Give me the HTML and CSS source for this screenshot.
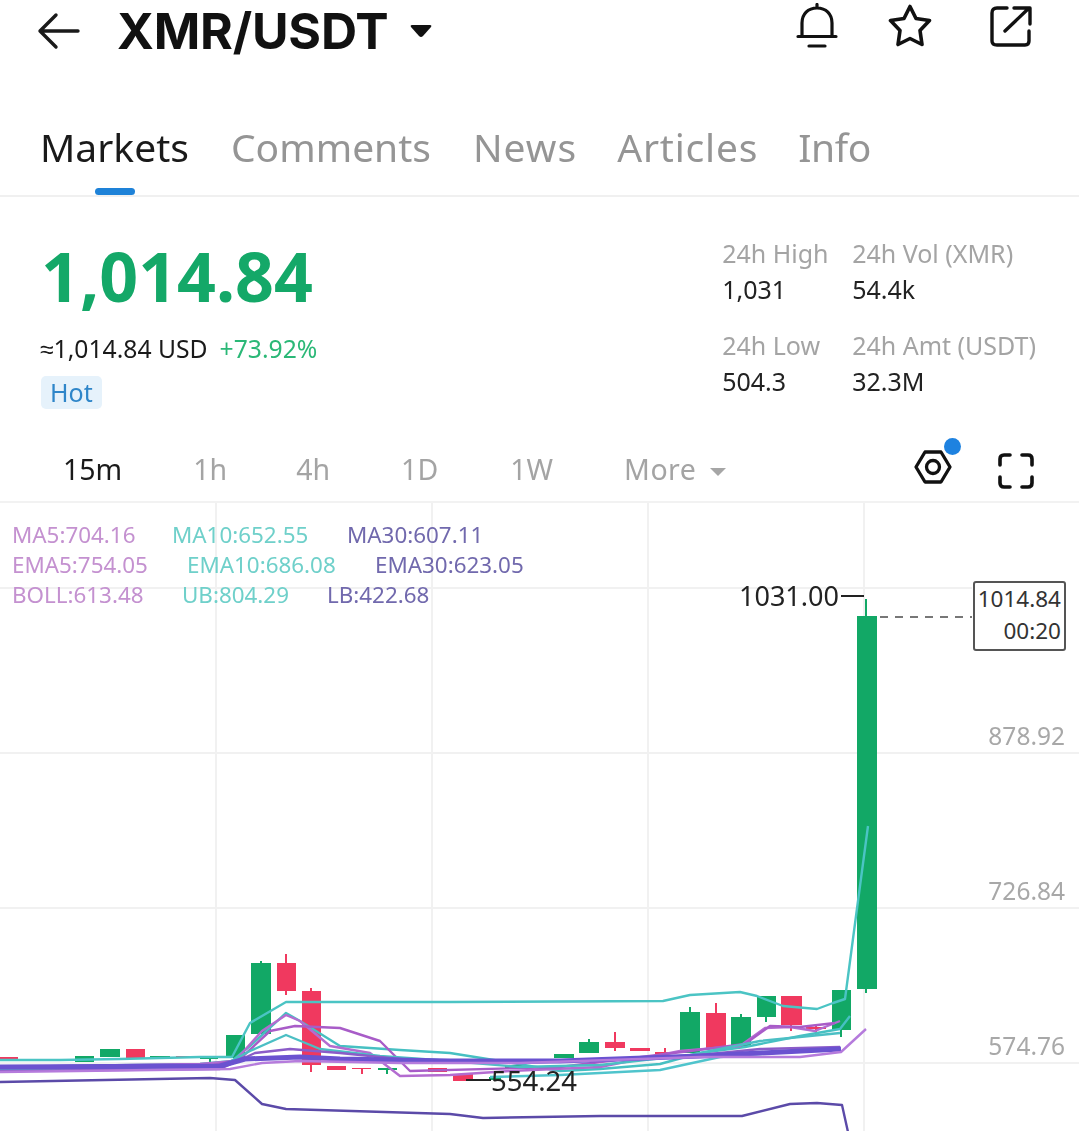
FILE: index.html
```html
<!DOCTYPE html>
<html lang="en">
<head>
<meta charset="utf-8">
<title>XMR/USDT</title>
<link rel="stylesheet" href="styles.css">
</head>
<body>
<div class="page">
  <header class="topbar">
    <svg class="back" width="46" height="40" viewBox="0 0 46 40" fill="none" stroke="#1a1a1a" stroke-width="3.4" stroke-linecap="round" stroke-linejoin="round"><path d="M4 20H42M20 4 4 20 20 36"/></svg>
    <h1 class="pair">XMR/USDT</h1>
    <svg class="caret" width="24" height="16" viewBox="0 0 24 16"><path d="M3 2H21Q23 2 22 4L14 13Q12 15 10 13L2 4Q1 2 3 2Z" fill="#111"/></svg>
    <div class="actions">
      <svg class="ic-bell" width="44" height="46" viewBox="0 0 44 46" fill="none" stroke="#111" stroke-width="3.200" stroke-linecap="round" stroke-linejoin="round"><path d="M22 1.500V4.500M3 33.500H41M7 33.500V20C7 11 13 5 22 5S37 11 37 20V33.500M14 43H30"/></svg>
      <svg class="ic-star" width="44" height="44" viewBox="0 0 44 44" fill="none" stroke="#111" stroke-width="3.600" stroke-linejoin="round"><path d="M22 2.500 28 14.500 41.500 16.500 32 26.500 34 40.500 22 34.500 10 40.500 12 26.500 2.500 16.500 16 14.500Z"/></svg>
      <svg class="ic-share" width="44" height="44" viewBox="0 0 44 44" fill="none" stroke="#111" stroke-width="3.400" stroke-linecap="round" stroke-linejoin="round"><path d="M18 4H8Q3 4 3 9V37Q3 41 8 41H36Q40 41 40 37V27M16 27 39 5M25 4H41V20"/></svg>
    </div>
  </header>

  <nav class="tabs">
    <span class="tab active">Markets</span>
    <span class="tab">Comments</span>
    <span class="tab t3">News</span>
    <span class="tab t4">Articles</span>
    <span class="tab t5">Info</span>
  </nav>

  <section class="summary">
    <div class="price-block">
      <div class="price">1,014.84</div>
      <div class="sub"><span class="fiat">≈1,014.84 USD</span><span class="pct">+73.92%</span></div>
      <span class="hot">Hot</span>
    </div>
    <div class="stats">
      <div class="stat"><span class="lbl">24h High</span><span class="val">1,031</span></div>
      <div class="stat"><span class="lbl">24h Vol (XMR)</span><span class="val">54.4k</span></div>
      <div class="stat"><span class="lbl">24h Low</span><span class="val">504.3</span></div>
      <div class="stat"><span class="lbl">24h Amt (USDT)</span><span class="val">32.3M</span></div>
    </div>
  </section>

  <div class="frames">
    <span class="frame on f1">15m</span>
    <span class="frame f2">1h</span>
    <span class="frame f3">4h</span>
    <span class="frame f4">1D</span>
    <span class="frame f5">1W</span>
    <span class="frame f6">More <svg width="18" height="10" viewBox="0 0 18 10"><path d="M1 1H17L9 9Z" fill="#a6a6a6"/></svg></span>
    <div class="tools">
      <span class="gear">
        <svg width="40" height="40" viewBox="0 0 40 40" fill="none" stroke="#111" stroke-width="3.300" stroke-linejoin="round"><path d="M11 5H27L36 20 27 35H11L2 20Z" transform="translate(1 0)"/><circle cx="20" cy="20" r="6.500"/></svg>
        <i class="dot"></i>
      </span>
      <svg class="full" width="36" height="36" viewBox="0 0 36 36" fill="none" stroke="#111" stroke-width="3.600" stroke-linecap="round" stroke-linejoin="round"><path d="M2 12V6Q2 2 6 2H12M24 2H30Q34 2 34 6V12M34 24V30Q34 34 30 34H24M12 34H6Q2 34 2 30V24"/></svg>
    </div>
  </div>

  <section class="chart">
    <svg class="plot" width="1079" height="629" viewBox="0 502 1079 629" fill="none">
      <g stroke="#f1f1f1" stroke-width="2">
        <path d="M0 587H972M0 752H1079M0 907H1079M0 1062H1079"/>
        <path d="M216 502V1131M432 502V1131M648 502V1131M864 502V1131"/>
      </g>
      <path stroke="#12a866" stroke-width="2" d="M261 960V964M866 598V992M690 1006V1014M741 1013V1018M766 1016V1021M841 1028V1036M589 1038V1042M210 1056V1064M387 1067V1073"/>
      <path stroke="#f0395f" stroke-width="2" d="M286 953V994M311 987V1071M362 1067V1073M615 1031V1050M665 1047V1057M716 1002V1014M791 1022V1030M816 1024V1034"/>
      <g fill="#12a866">
        <rect x="857" y="615" width="20" height="373"/>
        <rect x="251" y="962" width="20" height="71"/>
        <rect x="226" y="1034" width="19" height="23"/>
        <rect x="100" y="1048" width="20" height="8"/>
        <rect x="75" y="1055" width="19" height="6"/>
        <rect x="150" y="1055" width="20" height="3"/>
        <rect x="200" y="1056" width="18" height="2"/>
        <rect x="378" y="1067" width="19" height="2"/>
        <rect x="554" y="1053" width="20" height="4"/>
        <rect x="579" y="1041" width="20" height="11"/>
        <rect x="680" y="1011" width="20" height="41"/>
        <rect x="731" y="1016" width="20" height="30"/>
        <rect x="757" y="995" width="19" height="21"/>
        <rect x="832" y="989" width="19" height="40"/>
        <rect x="505" y="1064" width="20" height="4"/>
        <rect x="489" y="1076" width="12" height="3"/>
      </g>
      <g fill="#f0395f">
        <rect x="277" y="962" width="19" height="28"/>
        <rect x="302" y="990" width="19" height="74"/>
        <rect x="327" y="1065" width="19" height="4"/>
        <rect x="126" y="1048" width="19" height="10"/>
        <rect x="176" y="1055" width="19" height="2"/>
        <rect x="352" y="1067" width="19" height="1"/>
        <rect x="428" y="1067" width="19" height="4"/>
        <rect x="453" y="1073" width="20" height="7"/>
        <rect x="605" y="1041" width="20" height="6"/>
        <rect x="630" y="1047" width="20" height="3"/>
        <rect x="655" y="1051" width="20" height="2"/>
        <rect x="706" y="1012" width="20" height="36"/>
        <rect x="781" y="995" width="21" height="29"/>
        <rect x="806" y="1026" width="20" height="2"/>
        <rect x="50" y="1058" width="19" height="2"/>
        <rect x="0" y="1056" width="18" height="2"/>
      </g>
      <g stroke-width="2.400" stroke-linejoin="round">
        <polyline stroke="#4bc4c4" points="0,1059 60,1059 120,1058 200,1056 232,1056 250,1022 286,1001 450,1001 663,1000 690,994 740,991 757,995 783,1005 817,1008 833,1002 845,998 858,900 868,825"/>
        <polyline stroke="#46c0c2" points="0,1066 200,1063 232,1060 250,1045 286,1012 300,1020 340,1045 400,1049 450,1052 500,1060 560,1070 600,1068 660,1063 700,1052 745,1046 800,1035 840,1028 850,1015"/>
        <polyline stroke="#b36cd0" points="0,1066 200,1063 235,1060 262,1030 286,1014 300,1020 330,1045 370,1052 400,1075 450,1074 510,1070 600,1066 680,1050 740,1045 765,1027 790,1026 815,1030 840,1020"/>
        <polyline stroke="#a85cc8" points="0,1068 210,1065 240,1058 270,1030 295,1025 340,1027 380,1040 410,1070 560,1066 690,1050 745,1043 770,1025 800,1026 835,1022"/>
        <polyline stroke="#4bbfc4" points="0,1068 220,1066 250,1050 286,1034 320,1048 380,1055 450,1060 520,1066 600,1064 690,1054 760,1040 840,1032"/>
        <polyline stroke="#4fc4cc" points="490,1076 560,1074 660,1069 720,1056 800,1050"/>
        <polyline stroke="#8b5cc8" points="0,1070 220,1068 255,1052 290,1048 340,1052 420,1060 520,1062 690,1055 760,1048 840,1046"/>
        <polyline stroke="#6a52d0" stroke-width="5" points="0,1066 220,1065 245,1058 300,1056 340,1058 450,1060 560,1060 700,1055 760,1052 841,1048"/>
        <polyline stroke="#b57bdc" points="0,1071 230,1068 262,1062 300,1060 400,1062 520,1062 700,1056 800,1056 841,1051 866,1028"/>
        <polyline stroke="#5b4aa8" points="0,1081 210,1077 235,1079 262,1103 286,1108 450,1113 483,1117 600,1115 742,1115 790,1103 817,1102 842,1104 848,1131"/>
      </g>
      <path d="M841 595H864" stroke="#222" stroke-width="2"/>
      <path d="M466 1079H491" stroke="#222" stroke-width="2"/>
      <path d="M880 616H972" stroke="#777" stroke-width="2" stroke-dasharray="8 7"/>
    </svg>

    <div class="legend">
      <div class="row"><span class="c1 w1">MA5:704.16</span><span class="c2 w2">MA10:652.55</span><span class="c3">MA30:607.11</span></div>
      <div class="row"><span class="c1 w3">EMA5:754.05</span><span class="c2 w4">EMA10:686.08</span><span class="c3">EMA30:623.05</span></div>
      <div class="row"><span class="c1 w5">BOLL:613.48</span><span class="c2 w6">UB:804.29</span><span class="c3">LB:422.68</span></div>
    </div>

    <span class="mark hi">1031.00</span>
    <span class="mark lo">554.24</span>
    <div class="tag"><span>1014.84</span><span>00:20</span></div>
    <span class="axis a1">878.92</span>
    <span class="axis a2">726.84</span>
    <span class="axis a3">574.76</span>
  </section>
</div>
</body>
</html>
```

FILE: styles.css
```css
* { box-sizing: border-box; }
html, body { margin: 0; padding: 0; background: #fff; }
body { font-family: "Noto Sans", "Liberation Sans", sans-serif; color: #1a1a1a; }
.page { width: 1079px; height: 1131px; overflow: hidden; filter: blur(0.4px); }

.topbar { height: 62px; display: flex; align-items: center; padding-left: 36px; }
.back { margin-right: 35px; }
.pair { margin: 0; font-family: Inter, sans-serif; font-size: 50px; font-weight: 700; letter-spacing: -0.2px; color: #111; line-height: 62px; }
.caret { margin-left: 21px; }
.actions { margin-left: auto; margin-bottom: 11px; display: flex; align-items: center; padding-right: 46px; }
.ic-star { margin-left: 49px; }
.ic-share { margin-left: 57px; }

.tabs { height: 135px; padding: 60px 0 0 40px; display: flex; gap: 42px; border-bottom: 2px solid #f0f0f0; }
.tab { font-size: 39px; line-height: 50px; color: #959595; }
.t3 { letter-spacing: 1px; }
.t4 { letter-spacing: 0.8px; margin-left: -2px; }
.t5 { letter-spacing: -0.4px; margin-left: -2px; }
.tab.active { color: #1a1a1a; position: relative; }
.tab.active::after { content: ""; position: absolute; left: 55px; top: 66px; width: 40px; height: 7px; border-radius: 4px; background: #1e82d8; }

.summary { height: 236px; display: flex; justify-content: space-between; padding: 0 43px 0 41px; }
.price-block { padding-top: 41px; }
.price { font-size: 68px; line-height: 76px; font-weight: 700; color: #14a868; }
.sub { margin-top: 19px; display: flex; gap: 12px; font-size: 24.7px; line-height: 32px; margin-left: -1px; }
.fiat { color: #1a1a1a; }
.pct { color: #2bb877; }
.hot { display: inline-block; margin-top: 11px; padding: 0 9px; height: 33px; line-height: 32px; font-size: 25px; color: #2f86c9; background: #e6f2fb; border-radius: 5px; }
.stats { padding-top: 38px; display: grid; grid-template-columns: 130px auto; grid-auto-rows: 92px; }
.stat { display: flex; flex-direction: column; font-size: 25px; line-height: 36px; }
.lbl { color: #a4a4a4; }
.val { color: #222; }

.frames { height: 70px; display: flex; align-items: center; position: relative; border-bottom: 2px solid #f2f2f2; padding: 3px 0 0 63px; }
.frame { font-size: 28.5px; color: #a4a4a4; }
.frame.on { color: #1a1a1a; }
.f2 { margin-left: 71px; }
.f3 { margin-left: 69px; }
.f4 { margin-left: 71px; }
.f5 { margin-left: 72px; }
.f6 { margin-left: 71px; letter-spacing: 0.5px; }
.f6 svg { margin-left: 5px; vertical-align: 3px; }
.tools { margin-left: auto; margin-top: -3px; display: flex; align-items: center; gap: 45px; padding-right: 45px; }
.gear { position: relative; display: block; width: 40px; height: 40px; }
.dot { position: absolute; right: -8px; top: -9px; width: 17px; height: 17px; border-radius: 50%; background: #1e82e0; }
.full { margin-top: 8px; }

.chart { position: relative; height: 629px; }
.plot { display: block; }
.legend { position: absolute; left: 12px; top: 17px; font-size: 22.4px; line-height: 30px; }
.row { display: flex; }
.c1 { color: #c491d0; }
.c2 { color: #6fd0ca; }
.c3 { color: #7169ad; }
.w1 { width: 160px; }
.w2 { width: 175px; }
.w3 { width: 175px; }
.w4 { width: 188px; }
.w5 { width: 170px; }
.w6 { width: 145px; }

.mark { position: absolute; font-size: 27px; line-height: 36px; color: #222; }
.hi { left: 739px; top: 75px; }
.lo { left: 491px; top: 560px; font-size: 27.5px; }
.tag { position: absolute; left: 973px; top: 78px; width: 93px; height: 70px; border: 2px solid #555; border-radius: 3px; background: #fff; display: flex; flex-direction: column; align-items: flex-end; padding: 0 3px 0 0; font-size: 22.500px; line-height: 32px; color: #333; }
.axis { position: absolute; right: 14px; font-size: 24.500px; line-height: 32px; color: #a8a8a8; }
.a1 { top: 217px; }
.a2 { top: 372px; }
.a3 { top: 527px; }
```
